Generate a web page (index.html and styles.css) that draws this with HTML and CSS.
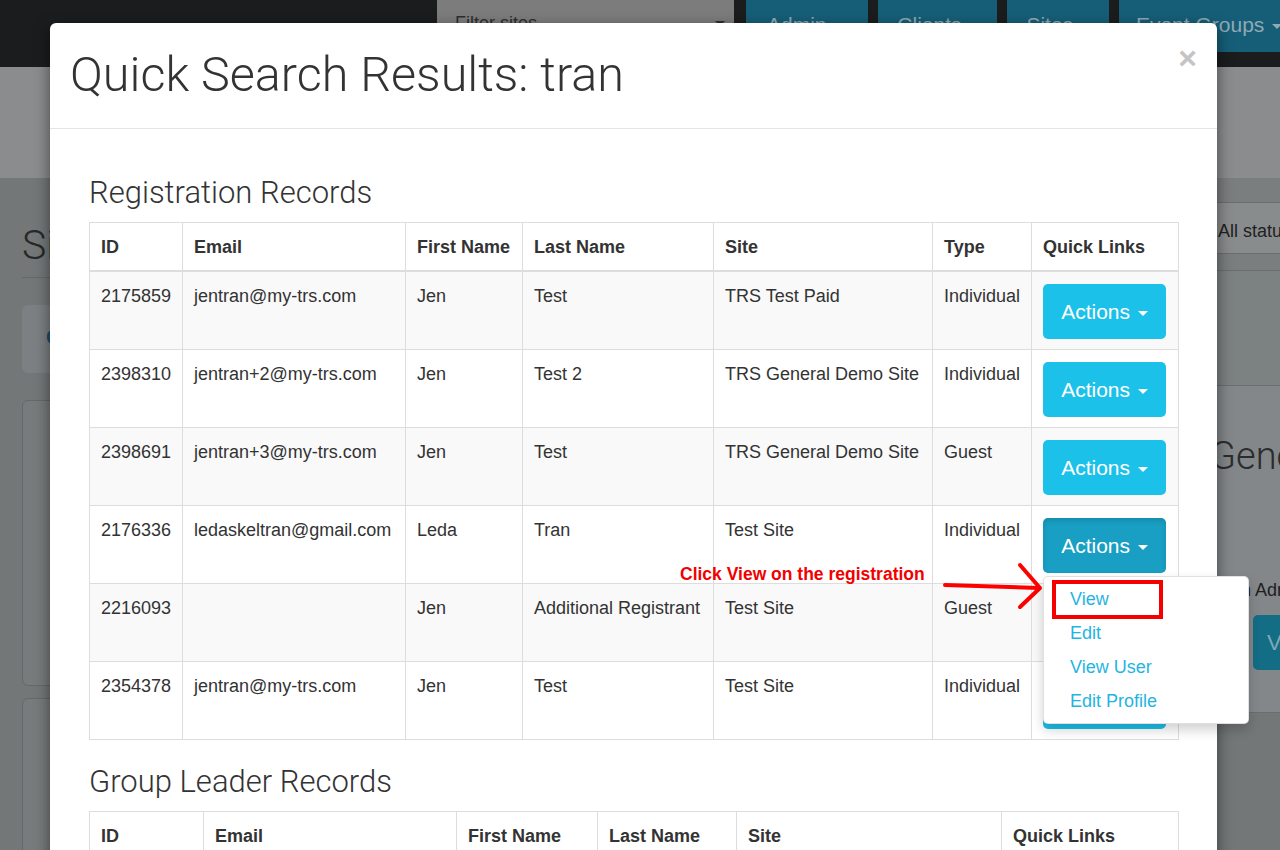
FILE: index.html
```html
<!DOCTYPE html>
<html>
<head>
<meta charset="UTF-8">
<title>Quick Search Results</title>
<link rel="stylesheet" href="styles.css">
</head>
<body>
<div class="page">

<!-- page behind the modal -->
<div class="topbar">
	<div class="search">Filter sites <span class="caret"></span></div>
	<ul class="mainnav">
		<li>Admin <span class="caret"></span></li>
		<li>Clients <span class="caret"></span></li>
		<li>Sites <span class="caret"></span></li>
		<li>Event Groups <span class="caret"></span></li>
	</ul>
</div>
<div class="subbar"></div>
<div class="content">
	<div class="left-col">
		<h1 class="page-title">Sites</h1>
		<div class="tool-box"><span class="tool-icon">C</span></div>
		<div class="side-panel"></div>
		<div class="side-panel last"></div>
	</div>
	<div class="right-col">
		<div class="filter-band"></div>
		<div class="status-select">All statuses</div>
		<div class="gap-band"></div>
		<div class="info-panel"></div>
		<div class="general-panel">
			<h2>General Demo Site</h2>
			<p>Registration Admin</p>
			<span class="view-btn">View</span>
		</div>
	</div>
</div>

<!-- modal -->
<div class="backdrop-modal">
	<div class="modal-header">
		<h1 class="modal-title">Quick Search Results: tran</h1>
		<span class="close">&times;</span>
	</div>
	<div class="modal-body">
		<h3>Registration Records</h3>
		<table class="results reg">
			<thead>
				<tr><th>ID</th><th>Email</th><th>First Name</th><th>Last Name</th><th>Site</th><th>Type</th><th>Quick Links</th></tr>
			</thead>
			<tbody>
				<tr><td>2175859</td><td>jentran@my-trs.com</td><td>Jen</td><td>Test</td><td>TRS Test Paid</td><td>Individual</td>
					<td><div class="btn-group"><span class="btn-actions">Actions <span class="caret"></span></span></div></td></tr>
				<tr><td>2398310</td><td>jentran+2@my-trs.com</td><td>Jen</td><td>Test 2</td><td>TRS General Demo Site</td><td>Individual</td>
					<td><div class="btn-group"><span class="btn-actions">Actions <span class="caret"></span></span></div></td></tr>
				<tr><td>2398691</td><td>jentran+3@my-trs.com</td><td>Jen</td><td>Test</td><td>TRS General Demo Site</td><td>Guest</td>
					<td><div class="btn-group"><span class="btn-actions">Actions <span class="caret"></span></span></div></td></tr>
				<tr><td>2176336</td><td>ledaskeltran@gmail.com</td><td>Leda</td><td>Tran</td><td>Test Site</td><td>Individual</td>
					<td><div class="btn-group open"><span class="btn-actions active">Actions <span class="caret"></span></span>
						<ul class="dropdown-menu">
							<li><a>View</a></li>
							<li><a>Edit</a></li>
							<li><a>View User</a></li>
							<li><a>Edit Profile</a></li>
						</ul>
						<span class="highlight"></span>
					</div></td></tr>
				<tr><td>2216093</td><td></td><td>Jen</td><td>Additional Registrant</td><td>Test Site</td><td>Guest</td>
					<td><div class="btn-group"><span class="btn-actions">Actions <span class="caret"></span></span></div></td></tr>
				<tr><td>2354378</td><td>jentran@my-trs.com</td><td>Jen</td><td>Test</td><td>Test Site</td><td>Individual</td>
					<td><div class="btn-group"><span class="btn-actions">Actions <span class="caret"></span></span></div></td></tr>
			</tbody>
		</table>

		<h3>Group Leader Records</h3>
		<table class="results leaders">
			<thead>
				<tr><th>ID</th><th>Email</th><th>First Name</th><th>Last Name</th><th>Site</th><th>Quick Links</th></tr>
			</thead>
			<tbody>
				<tr><td>1184502</td><td>jentran@my-trs.com</td><td>Jen</td><td>Tran</td><td>TRS General Demo Site</td>
					<td><div class="btn-group"><span class="btn-actions">Actions <span class="caret"></span></span></div></td></tr>
			</tbody>
		</table>
	</div>
</div>

<!-- screenshot annotation -->
<div class="note">Click View on the registration</div>
<svg class="note-arrow" width="110" height="60" viewBox="0 0 110 60">
	<path d="M5 25 L99 28" stroke="#f00" stroke-width="4" fill="none" stroke-linecap="round"/>
	<path d="M80 5 L100 28 L80 47" stroke="#f00" stroke-width="4" fill="none" stroke-linecap="round" stroke-linejoin="round"/>
</svg>

</div>
</body>
</html>
```

FILE: styles.css
```css
body {
	margin: 0;
	font-family: "Liberation Sans", Arial, sans-serif;
	color: #333;
}
.page {
	position: relative;
	width: 1280px;
	height: 850px;
	overflow: hidden;
	background: #737778;
}

/* background page (already dimmed) */
.topbar {
	display: flex;
	height: 67px;
	background: #1b1c1e;
}
.search {
	flex-shrink: 0;
	width: 270px;
	height: 46px;
	margin-left: 437px;
	padding: 0 9px 0 18px;
	background: #7c7c7c;
	border-radius: 0 0 4px 4px;
	color: #2e2e2e;
	font-size: 18px;
	line-height: 46px;
	display: flex;
	justify-content: space-between;
	align-items: center;
}
.search .caret { border-top-color: #2e2e2e; }
.mainnav {
	flex-shrink: 0;
	list-style: none;
	margin: 0 0 0 12px;
	padding: 0;
	display: flex;
	gap: 10px;
}
.mainnav li {
	height: 52px;
	padding: 0 18px 0 19px;
	background: #165e77;
	color: #8eaab4;
	font-size: 21px;
	line-height: 50px;
	white-space: nowrap;
}
.mainnav li:first-child { padding: 0 24px 0 21px; }
.mainnav li:last-child { padding-left: 17px; }
.mainnav .caret { border-top-color: #8eaab4; margin-left: 2px; }
.subbar {
	height: 111px;
	background: #8a8c8d;
}
.content {
	display: flex;
}
.left-col {
	flex: 1;
	padding-left: 22px;
}
.page-title {
	margin: 48px 0 0;
	padding-bottom: 13px;
	border-bottom: 1px solid #65696a;
	font-size: 41px;
	font-weight: 300;
	font-family: Roboto, "Liberation Sans", sans-serif;
	color: #262829;
	line-height: 38px;
}
.tool-box {
	height: 68px;
	margin-top: 27px;
	background: #7c8082;
	border-radius: 6px;
}
.tool-icon {
	display: inline-block;
	margin: 21px 0 0 24px;
	color: #1b4c72;
	font-weight: bold;
	font-size: 20px;
}
.side-panel {
	height: 284px;
	margin-top: 27px;
	border: 1px solid #66696b;
	border-radius: 6px;
	background: #777b7c;
}
.side-panel.last { margin-top: 12px; }
.right-col {
	flex: 0 0 70px;
	min-width: 0;
	white-space: nowrap;
}
.filter-band {
	height: 24px;
	background: #7a7e7f;
	border-bottom: 1px solid #6a6e6f;
}
.status-select {
	height: 50px;
	padding-left: 8px;
	background: #898c8d;
	border-bottom: 1px solid #6a6e6f;
	color: #1e2021;
	font-size: 18px;
	line-height: 56px;
}
.gap-band {
	height: 16px;
	background: #7a7e7f;
	border-bottom: 1px solid #6a6e6f;
}
.info-panel {
	height: 114px;
	background: #7c8182;
	border-bottom: 1px solid #6a6e6f;
}
.general-panel {
	height: 326px;
	background: #83878a;
	border-bottom: 1px solid #6a6e6f;
}
.general-panel h2 {
	margin: 0;
	padding-top: 48px;
	font-family: Roboto, "Liberation Sans", sans-serif;
	font-weight: 300;
	font-size: 38px;
	color: #2a2c2d;
}
.general-panel p {
	margin: 100px 0 0 15px;
	font-size: 18px;
	line-height: 25px;
	color: #1e2021;
	text-indent: -70px;
}
.view-btn {
	display: inline-block;
	margin: 12px 0 0 43px;
	width: 100px;
	height: 55px;
	border-radius: 5px;
	background: #136d85;
	color: #7fa9b7;
	font-size: 22px;
	line-height: 55px;
	padding-left: 14px;
}

.caret {
	display: inline-block;
	width: 0;
	height: 0;
	margin-left: 4px;
	vertical-align: middle;
	border-top: 5px solid #fff;
	border-left: 5px solid transparent;
	border-right: 5px solid transparent;
}

/* modal */
.backdrop-modal {
	position: absolute;
	left: 50px;
	top: 23px;
	width: 1167px;
	height: 900px;
	background: #fff;
	border-radius: 6px;
	box-shadow: 0 5px 15px rgba(0,0,0,.5);
}
.modal-header {
	display: flex;
	justify-content: space-between;
	align-items: flex-start;
	padding: 27px 20px 28px;
	border-bottom: 1px solid #e5e5e5;
}
.modal-title {
	margin: 0;
	font-family: Roboto, "Liberation Sans", sans-serif;
	font-weight: 300;
	font-size: 48.5px;
	line-height: 50px;
	color: #333;
}
.close {
	margin-top: -8px;
	font-size: 32px;
	font-weight: bold;
	line-height: 32px;
	color: #c4c4c4;
}
.modal-body {
	padding: 47px 39px 0;
}
.modal-body h3 {
	margin: 0 0 13px;
	font-family: Roboto, "Liberation Sans", sans-serif;
	font-weight: 300;
	font-size: 31px;
	line-height: 33px;
	color: #333;
}
.modal-body table + h3 { margin-top: 25px; }

.results {
	width: 100%;
	border-collapse: collapse;
	table-layout: fixed;
	font-size: 18px;
	line-height: 25px;
}
.results th, .results td {
	box-sizing: border-box;
	border: 1px solid #ddd;
	text-align: left;
	vertical-align: top;
	padding: 12px 11px 10px;
}
.results th {
	padding: 12px 11px 10px;
	border-bottom-width: 2px;
	font-weight: bold;
}
.results tbody tr:nth-child(odd) { background: #f9f9f9; }

.reg th:nth-child(1) { width: 93px; }
.reg th:nth-child(2) { width: 223px; }
.reg th:nth-child(3) { width: 117px; }
.reg th:nth-child(4) { width: 191px; }
.reg th:nth-child(5) { width: 219px; }
.reg th:nth-child(6) { width: 99px; }
.reg th:nth-child(7) { width: 147px; }
.leaders th:nth-child(1) { width: 114px; }
.leaders th:nth-child(2) { width: 253px; }
.leaders th:nth-child(3) { width: 141px; }
.leaders th:nth-child(4) { width: 139px; }
.leaders th:nth-child(5) { width: 265px; }
.leaders th:nth-child(6) { width: 177px; }

.btn-group {
	position: relative;
	display: inline-block;
}
.btn-actions {
	display: block;
	width: 123px;
	height: 55px;
	box-sizing: border-box;
	border-radius: 5px;
	background: #1cc1ea;
	color: #fff;
	font-size: 21px;
	line-height: 55px;
	text-align: center;
}
.btn-actions .caret { margin-left: 2px; }
.btn-actions.active {
	background: #189fc3;
	box-shadow: inset 0 3px 5px rgba(0,0,0,.12);
}
.dropdown-menu {
	position: absolute;
	z-index: 5;
	top: 58px;
	left: 0;
	width: 206px;
	margin: 0;
	padding: 5px 0;
	list-style: none;
	background: #fff;
	border: 1px solid rgba(0,0,0,.12);
	border-radius: 5px;
	box-shadow: 0 6px 12px rgba(0,0,0,.18);
	box-sizing: border-box;
}
.dropdown-menu a {
	display: block;
	padding: 0 26px;
	line-height: 34px;
	font-size: 18px;
	color: #1fb5e1;
}
.highlight {
	position: absolute;
	z-index: 6;
	left: 9px;
	top: 62px;
	width: 111px;
	height: 39px;
	box-sizing: border-box;
	border: 4px solid #f40000;
}

/* annotation */
.note {
	position: absolute;
	left: 680px;
	top: 563px;
	color: #f20000;
	font-weight: bold;
	font-size: 17.5px;
	line-height: 22px;
}
.note-arrow {
	position: absolute;
	left: 940px;
	top: 560px;
}
```
